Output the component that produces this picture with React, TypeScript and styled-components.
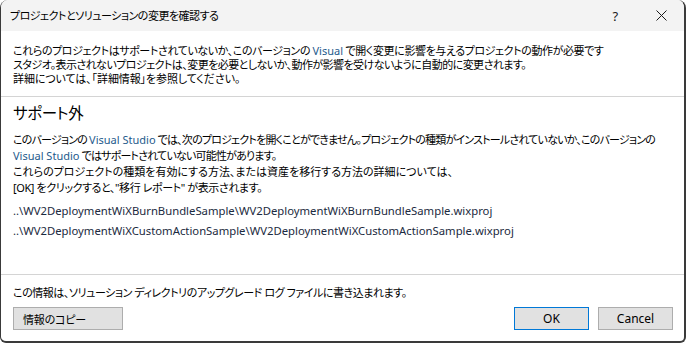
import React from "react";
import styled, { createGlobalStyle } from "styled-components";

const GlobalStyle = createGlobalStyle`
  html, body { margin: 0; padding: 0; background: #ffffff; }
  body { font-family: "Noto Sans", "Noto Sans CJK JP", sans-serif; }
`;

const JP = `"Noto Sans", "Noto Sans CJK JP", sans-serif`;

const Window = styled.div`
  box-sizing: border-box;
  width: 686px;
  height: 343px;
  display: flex;
  flex-direction: column;
  background: #ffffff;
  border-left: 1px solid #3a3a3a;
  border-right: 2px solid #3a3a3a;
  border-bottom: 2px solid #3a3a3a;
  border-radius: 8px 8px 6px 6px;
  overflow: hidden;
  font-family: ${JP};
  font-feature-settings: "palt";
  letter-spacing: -0.4px;
  color: #000;
`;

const TitleBar = styled.div`
  height: 31px;
  flex: none;
  display: flex;
  align-items: center;
  background: #f3f3f3;
  padding-left: 9px;
`;

const Title = styled.div`
  flex: 1;
  font-size: 11px;
  color: #000;
  line-height: 1;
  letter-spacing: -0.5px;
`;

const CaptionButton = styled.div<{ $w: number }>`
  width: ${(p) => p.$w}px;
  height: 31px;
  display: flex;
  align-items: center;
  justify-content: center;
  font-size: 13px;
  color: #1a1a1a;
`;

const Header = styled.div`
  flex: none;
  height: 66px;
  box-sizing: border-box;
  padding: 13px 12px 0 12px;
  border-bottom: 1px solid #d4d4d4;
  display: flex;
  flex-direction: column;
`;

const HeaderLine = styled.div<{ $small?: boolean; $ls?: number }>`
  font-size: ${(p) => (p.$small ? "11px" : "11px")};
  line-height: ${(p) => (p.$small ? "13px" : "14px")};
  letter-spacing: ${(p) => (p.$ls ?? -0.4)}px;
  white-space: nowrap;
`;

const Content = styled.div`
  flex: 1;
  padding: 6px 12px 0 12px;
  display: flex;
  flex-direction: column;
`;

const Heading = styled.div`
  font-size: 15.5px;
  line-height: 20px;
  margin-bottom: 9px;
`;

const BodyLine = styled.div<{ $ls?: number }>`
  font-size: 11px;
  line-height: 16px;
  letter-spacing: ${(p) => (p.$ls ?? -0.4)}px;
  white-space: nowrap;
`;

const Brand = styled.span`
  color: #1e5a8c;
  letter-spacing: 0;
`;

const Paths = styled.div`
  margin-top: 7px;
  display: flex;
  flex-direction: column;
  gap: 4px;
`;

const PathLine = styled.div`
  font-family: "Noto Sans", sans-serif;
  font-size: 11.3px;
  letter-spacing: 0;
  line-height: 16px;
  color: #1b2a40;
  white-space: nowrap;
`;

const Footer = styled.div`
  flex: none;
  height: 67px;
  box-sizing: border-box;
  border-top: 1px solid #d4d4d4;
  padding: 10px 11px 0 12px;
  display: flex;
  flex-direction: column;
`;

const FooterText = styled.div`
  font-size: 11px;
  line-height: 16px;
  letter-spacing: -0.45px;
  white-space: nowrap;
`;

const ButtonRow = styled.div`
  margin-top: 6px;
  display: flex;
  align-items: center;
`;

const Spacer = styled.div`
  flex: 1;
`;

const Button = styled.button<{ $w: number; $primary?: boolean }>`
  box-sizing: border-box;
  width: ${(p) => p.$w}px;
  height: 23px;
  margin-left: ${(p) => (p.$primary ? "0" : "9px")};
  background: #e1e1e1;
  border: 1px solid ${(p) => (p.$primary ? "#0078d7" : "#adadad")};
  font-family: ${JP};
  font-feature-settings: "palt";
  font-size: 12px;
  color: #000;
  padding: 0;
  display: flex;
  align-items: center;
  justify-content: center;
`;

const LeftButton = styled(Button)`
  justify-content: flex-start;
  padding-left: 9px;
  margin-left: 0;
  border-color: #adadad;
  font-size: 11px;
  letter-spacing: -0.2px;
`;

export default function App() {
  return (
    <>
      <GlobalStyle />
      <Window>
        <TitleBar>
          <Title>プロジェクトとソリューションの変更を確認する</Title>
          <CaptionButton $w={46}>?</CaptionButton>
          <CaptionButton $w={46}>
            <svg width="11" height="11" viewBox="0 0 11 11">
              <path d="M0.5 0.5 L10.5 10.5 M10.5 0.5 L0.5 10.5" stroke="#1a1a1a" strokeWidth="1" />
            </svg>
          </CaptionButton>
        </TitleBar>
        <Header>
          <HeaderLine>
            これらのプロジェクトはサポートされていないか、このバージョンの <Brand>Visual</Brand> で開く変更に影響を与えるプロジェクトの動作が必要です
          </HeaderLine>
          <HeaderLine $ls={-0.55}>
            スタジオ。表示されないプロジェクトは、変更を必要としないか、動作が影響を受けないように自動的に変更されます。
          </HeaderLine>
          <HeaderLine $small $ls={-0.1}>詳細については、「詳細情報」を参照してください。</HeaderLine>
        </Header>
        <Content>
          <Heading>サポート外</Heading>
          <BodyLine $ls={-0.8}>
            このバージョンの <Brand>Visual Studio</Brand> では、次のプロジェクトを開くことができません。プロジェクトの種類がインストールされていないか、このバージョンの
          </BodyLine>
          <BodyLine $ls={-0.8}>
            <Brand>Visual Studio</Brand> ではサポートされていない可能性があります。
          </BodyLine>
          <BodyLine $ls={0}>
            これらのプロジェクトの種類を有効にする方法、または資産を移行する方法の詳細については、
          </BodyLine>
          <BodyLine>[OK] をクリックすると、"移行 レポート" が表示されます。</BodyLine>
          <Paths>
            <PathLine>..\WV2DeploymentWiXBurnBundleSample\WV2DeploymentWiXBurnBundleSample.wixproj</PathLine>
            <PathLine>..\WV2DeploymentWiXCustomActionSample\WV2DeploymentWiXCustomActionSample.wixproj</PathLine>
          </Paths>
        </Content>
        <Footer>
          <FooterText>この情報は、ソリューション ディレクトリのアップグレード ログ ファイルに書き込まれます。</FooterText>
          <ButtonRow>
            <LeftButton $w={110}>情報のコピー</LeftButton>
            <Spacer />
            <Button $w={75} $primary>OK</Button>
            <Button $w={75}>Cancel</Button>
          </ButtonRow>
        </Footer>
      </Window>
    </>
  );
}
